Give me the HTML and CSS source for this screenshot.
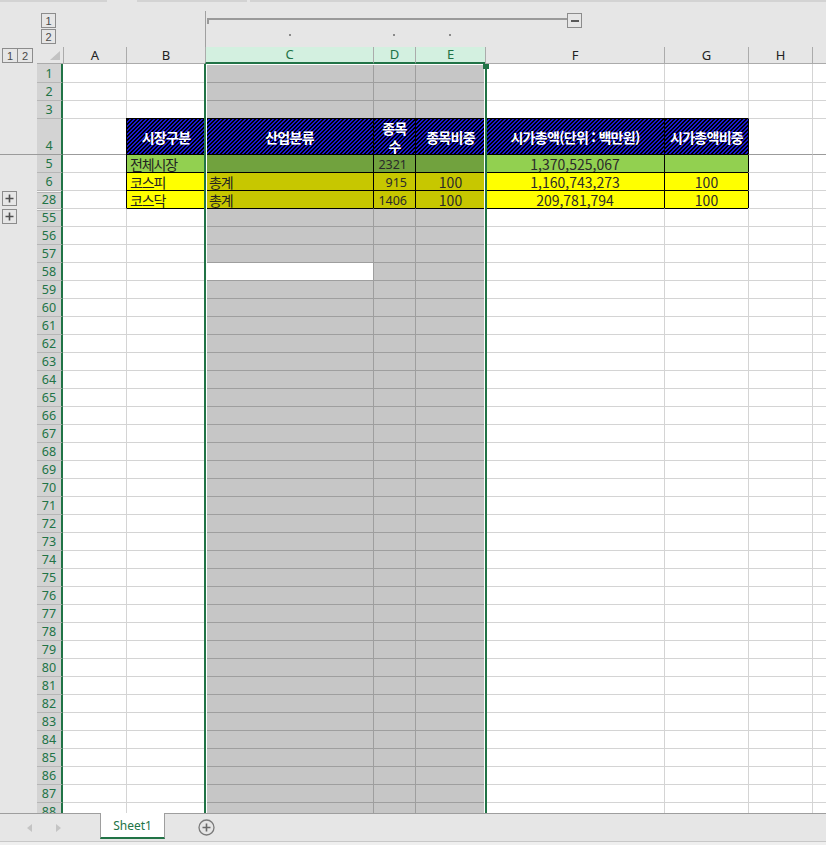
FILE: index.html
```html
<!DOCTYPE html>
<html lang="ko">
<head>
<meta charset="utf-8">
<title>Sheet1</title>
<link rel="stylesheet" href="styles.css">
</head>
<body>
<div class="app">
  <div class="topstrip"><span class="seg s1"></span><span class="seg s2"></span><span class="seg s3"></span></div>

  <div class="colout">
    <span></span>
    <span class="lvls"><b class="lv">1</b><b class="lv">2</b></span>
    <span></span><span></span>
    <div class="grp">
      <div class="barrow"><span class="bar"></span><span class="lv minus"><i></i></span></div>
      <div class="dots"><span><i></i></span><span><i></i></span><span><i></i></span></div>
    </div>
  </div>

  <div class="colhead">
    <span class="rowlv"><b class="lv">1</b><b class="lv lv2">2</b></span>
    <span class="corner"><svg width="10" height="9" viewBox="0 0 10 9"><polygon points="10,0 10,9 0,9" fill="#c2c2c2"/></svg></span>
    <span class="chd">A</span>
    <span class="chd">B</span>
    <span class="chd sel">C</span>
    <span class="chd sel">D</span>
    <span class="chd sel">E</span>
    <span class="chd">F</span>
    <span class="chd">G</span>
    <span class="chd">H</span>
    <span class="chd"></span>
  </div>

  <div class="grid">
    <div class="r r1"><span></span><span>1</span><span></span><span></span><span></span><span></span><span></span><span></span><span></span><span></span><span></span></div>
    <div class="r"><span></span><span>2</span><span></span><span></span><span></span><span></span><span></span><span></span><span></span><span></span><span></span></div>
    <div class="r"><span></span><span>3</span><span></span><span></span><span></span><span></span><span></span><span></span><span></span><span></span><span></span></div>
    <div class="r r4"><span></span><span>4</span><span></span><span class="d hd">시장구분</span><span class="d hd">산업분류</span><span class="d hd"><em>종목<br>수</em></span><span class="d hd">종목비중</span><span class="d hd">시가총액(단위 : 백만원)</span><span class="d hd">시가총액비중</span><span class="dr"></span><span></span></div>
    <div class="r r5"><span></span><span>5</span><span></span><span class="d g l">전체시장</span><span class="d gs"></span><span class="d gs n rt">2321</span><span class="d gs"></span><span class="d g n c">1,370,525,067</span><span class="d g"></span><span class="dr"></span><span></span></div>
    <div class="r"><span></span><span>6</span><span></span><span class="d y l">코스피</span><span class="d ys l">총계</span><span class="d ys n rt">915</span><span class="d ys n c">100</span><span class="d y n c">1,160,743,273</span><span class="d y n c">100</span><span class="dr"></span><span></span></div>
    <div class="r"><span class="ol"><b class="lv plus"><svg width="13" height="13" viewBox="0 0 13 13"><path d="M2.5 6.5h8M6.5 2.5v8" stroke="#505050" stroke-width="1.6"/></svg></b></span><span class="hid">28</span><span></span><span class="d y l">코스닥</span><span class="d ys l">총계</span><span class="d ys n rt">1406</span><span class="d ys n c">100</span><span class="d y n c">209,781,794</span><span class="d y n c">100</span><span class="dr"></span><span></span></div>
    <div class="r"><span class="ol"><b class="lv plus"><svg width="13" height="13" viewBox="0 0 13 13"><path d="M2.5 6.5h8M6.5 2.5v8" stroke="#505050" stroke-width="1.6"/></svg></b></span><span class="hid">55</span><span></span><span class="dt"></span><span class="dt"></span><span class="dt"></span><span class="dt"></span><span class="dt"></span><span class="dt"></span><span></span><span></span></div>
    <div class="r"><span></span><span>56</span><span></span><span></span><span></span><span></span><span></span><span></span><span></span><span></span><span></span></div>
    <div class="r"><span></span><span>57</span><span></span><span></span><span></span><span></span><span></span><span></span><span></span><span></span><span></span></div>
    <div class="r"><span></span><span>58</span><span></span><span></span><span class="act"></span><span></span><span></span><span></span><span></span><span></span><span></span></div>
    <div class="r"><span></span><span>59</span><span></span><span></span><span></span><span></span><span></span><span></span><span></span><span></span><span></span></div>
    <div class="r"><span></span><span>60</span><span></span><span></span><span></span><span></span><span></span><span></span><span></span><span></span><span></span></div>
    <div class="r"><span></span><span>61</span><span></span><span></span><span></span><span></span><span></span><span></span><span></span><span></span><span></span></div>
    <div class="r"><span></span><span>62</span><span></span><span></span><span></span><span></span><span></span><span></span><span></span><span></span><span></span></div>
    <div class="r"><span></span><span>63</span><span></span><span></span><span></span><span></span><span></span><span></span><span></span><span></span><span></span></div>
    <div class="r"><span></span><span>64</span><span></span><span></span><span></span><span></span><span></span><span></span><span></span><span></span><span></span></div>
    <div class="r"><span></span><span>65</span><span></span><span></span><span></span><span></span><span></span><span></span><span></span><span></span><span></span></div>
    <div class="r"><span></span><span>66</span><span></span><span></span><span></span><span></span><span></span><span></span><span></span><span></span><span></span></div>
    <div class="r"><span></span><span>67</span><span></span><span></span><span></span><span></span><span></span><span></span><span></span><span></span><span></span></div>
    <div class="r"><span></span><span>68</span><span></span><span></span><span></span><span></span><span></span><span></span><span></span><span></span><span></span></div>
    <div class="r"><span></span><span>69</span><span></span><span></span><span></span><span></span><span></span><span></span><span></span><span></span><span></span></div>
    <div class="r"><span></span><span>70</span><span></span><span></span><span></span><span></span><span></span><span></span><span></span><span></span><span></span></div>
    <div class="r"><span></span><span>71</span><span></span><span></span><span></span><span></span><span></span><span></span><span></span><span></span><span></span></div>
    <div class="r"><span></span><span>72</span><span></span><span></span><span></span><span></span><span></span><span></span><span></span><span></span><span></span></div>
    <div class="r"><span></span><span>73</span><span></span><span></span><span></span><span></span><span></span><span></span><span></span><span></span><span></span></div>
    <div class="r"><span></span><span>74</span><span></span><span></span><span></span><span></span><span></span><span></span><span></span><span></span><span></span></div>
    <div class="r"><span></span><span>75</span><span></span><span></span><span></span><span></span><span></span><span></span><span></span><span></span><span></span></div>
    <div class="r"><span></span><span>76</span><span></span><span></span><span></span><span></span><span></span><span></span><span></span><span></span><span></span></div>
    <div class="r"><span></span><span>77</span><span></span><span></span><span></span><span></span><span></span><span></span><span></span><span></span><span></span></div>
    <div class="r"><span></span><span>78</span><span></span><span></span><span></span><span></span><span></span><span></span><span></span><span></span><span></span></div>
    <div class="r"><span></span><span>79</span><span></span><span></span><span></span><span></span><span></span><span></span><span></span><span></span><span></span></div>
    <div class="r"><span></span><span>80</span><span></span><span></span><span></span><span></span><span></span><span></span><span></span><span></span><span></span></div>
    <div class="r"><span></span><span>81</span><span></span><span></span><span></span><span></span><span></span><span></span><span></span><span></span><span></span></div>
    <div class="r"><span></span><span>82</span><span></span><span></span><span></span><span></span><span></span><span></span><span></span><span></span><span></span></div>
    <div class="r"><span></span><span>83</span><span></span><span></span><span></span><span></span><span></span><span></span><span></span><span></span><span></span></div>
    <div class="r"><span></span><span>84</span><span></span><span></span><span></span><span></span><span></span><span></span><span></span><span></span><span></span></div>
    <div class="r"><span></span><span>85</span><span></span><span></span><span></span><span></span><span></span><span></span><span></span><span></span><span></span></div>
    <div class="r"><span></span><span>86</span><span></span><span></span><span></span><span></span><span></span><span></span><span></span><span></span><span></span></div>
    <div class="r"><span></span><span>87</span><span></span><span></span><span></span><span></span><span></span><span></span><span></span><span></span><span></span></div>
    <div class="r"><span></span><span>88</span><span></span><span></span><span></span><span></span><span></span><span></span><span></span><span></span><span></span></div>
    <div class="selbox"><span class="handle"></span></div>
  </div>

  <div class="tabbar">
    <div class="nav">
      <svg class="arr al" width="5" height="8" viewBox="0 0 5 8"><polygon points="5,0 5,8 0,4" fill="#c4c4c4"/></svg>
      <svg class="arr ar" width="5" height="8" viewBox="0 0 5 8"><polygon points="0,0 0,8 5,4" fill="#c4c4c4"/></svg>
    </div>
    <div class="tab">Sheet1</div>
    <svg class="addsheet" width="17" height="17" viewBox="0 0 17 17"><circle cx="8.5" cy="8.5" r="7.5" fill="none" stroke="#7a7a7a" stroke-width="1.3"/><path d="M4.5 8.5h8M8.5 4.5v8" stroke="#6a6a6a" stroke-width="1.6"/></svg>
  </div>
  <div class="foot"></div>
</div>
</body>
</html>
```

FILE: styles.css
```css
:root {
  --cols: 37px 26px 63px 79px 168px 42px 70px 179px 84px 64px 14px;
  --green: #217346;
}
* { box-sizing: border-box; }
html, body { margin: 0; padding: 0; }
body {
  background: #e6e6e6;
  font-family: "Noto Sans", "Liberation Sans", sans-serif;
}
.app {
  width: 826px;
  height: 845px;
  overflow: hidden;
  background: #e6e6e6;
  display: flex;
  flex-direction: column;
}

/* top strip */
.topstrip { height: 2px; display: flex; flex: none; }
.seg { height: 2px; background: #d3d3d3; }
.s1 { width: 107px; }
.s2 { width: 110px; margin-left: 30px; }
.s3 { flex: 1; margin-left: 3px; }

/* outline level buttons */
.lv {
  display: flex;
  align-items: center;
  justify-content: center;
  width: 15px;
  height: 15px;
  border: 1px solid #8c8c8c;
  font-family: "Liberation Sans", sans-serif;
  font-weight: 400;
  font-size: 11px;
  color: #4a4a4a;
  background: #e6e6e6;
}

/* column outline area */
.colout {
  flex: none;
  height: 45px;
  display: grid;
  grid-template-columns: var(--cols);
}
.lvls {
  display: flex;
  flex-direction: column;
  gap: 1px;
  padding: 11px 0 0 4px;
}
.grp {
  grid-column: 5 / 9;
  margin-top: 9px;
  border-left: 1px solid #a0a0a0;
}
.barrow {
  display: flex;
  align-items: flex-start;
  margin-top: 2px;
  height: 15px;
}
.bar {
  position: relative;
  width: 360px;
  height: 2px;
  margin: 5px 0 0 1px;
  background: #9a9a9a;
}
.bar::before {
  content: "";
  position: absolute;
  left: 0;
  top: 0;
  width: 2px;
  height: 6px;
  background: #9a9a9a;
}
.minus i {
  display: block;
  width: 8px;
  height: 2px;
  background: #595959;
}
.dots {
  display: grid;
  grid-template-columns: 167px 42px 70px;
  margin-top: 6px;
}
.dots span { display: flex; justify-content: center; }
.dots i { display: block; width: 2px; height: 2px; background: #8a8a8a; }

/* column header row */
.colhead {
  flex: none;
  height: 17px;
  display: grid;
  grid-template-columns: var(--cols);
}
.rowlv { display: flex; padding: 1px 0 0 2px; }
.rowlv .lv { width: 16px; }
.rowlv .lv2 { margin-left: -1px; }
.corner {
  display: flex;
  align-items: flex-end;
  justify-content: flex-end;
  padding: 0 3px 3px 0;
  border-bottom: 1px solid #ababab;
}
.chd {
  display: flex;
  align-items: center;
  justify-content: center;
  border-left: 1px solid #ababab;
  border-bottom: 1px solid #ababab;
  font-size: 13px;
  color: #222;
  line-height: 1;
}
.chd.sel {
  background: #d3f0e0;
  color: var(--green);
  border-bottom: 2px solid var(--green);
}

/* sheet grid */
.grid {
  flex: none;
  height: 749px;
  position: relative;
  overflow: hidden;
  background: #fff;
}
.r {
  display: grid;
  grid-template-columns: var(--cols);
  height: 18px;
}
.r.r4 { height: 36px; }
.r > span {
  display: flex;
  align-items: center;
  background: #fff;
  border-left: 1px solid #d4d4d4;
  border-top: 1px solid #d4d4d4;
  font-family: "Noto Sans CJK KR", "Noto Sans", sans-serif;
  font-size: 14px;
  letter-spacing: -1.1px;
  line-height: 1;
  color: #222;
  white-space: nowrap;
  overflow: hidden;
}
.r1 > span { border-top: 0; }
.r > span:nth-child(1) {
  background: #e6e6e6;
  border: 0;
  align-items: flex-start;
  padding: 1px 0 0 2px;
}
.r > span:nth-child(2) {
  background: #d3d3d3;
  border-left: 0;
  border-right: 2px solid var(--green);
  border-top: 1px solid #b6b6b6;
  justify-content: center;
  align-items: flex-end;
  padding-bottom: 2px;
  font-family: "Noto Sans", "Liberation Sans", sans-serif;
  font-size: 12.5px;
  letter-spacing: 0;
  color: var(--green);
}
.r1 > span:nth-child(2) { border-top: 0; }
.r > span:nth-child(3) { border-left: 0; }
.r > span:nth-child(5),
.r > span:nth-child(6),
.r > span:nth-child(7) {
  background: #c6c6c6;
  border-color: #9e9e9e;
}
.r > span.hid {
  box-shadow: inset 0 1px 0 #f4f4f4, inset 0 2px 0 #b6b6b6;
}
.r5 > span { border-top-color: #9b9b9b; }
.r5 > span:nth-child(1) { border-top: 1px solid #9b9b9b; }
.r5 > span:nth-child(2) { border-top-color: #9b9b9b; }
.r > span.act { background: #fff; }

/* data table */
.r > span.d { border-left-color: #000; border-top-color: #000; }
.r > span.dr { border-left-color: #000; }
.r > span.dt { border-top-color: #000; }
.r > span.hd {
  background: repeating-linear-gradient(135deg, #000 0 1.7px, #1a1ad0 1.7px 2.83px);
  color: #fff;
  font-weight: 700;
  letter-spacing: -0.7px;
  justify-content: center;
  text-align: center;
}
.hd em { font-style: normal; line-height: 18px; display: block; }
.r > span.g { background: #92d050; }
.r > span.gs { background: #71a23e; }
.r > span.y { background: #ffff00; }
.r > span.ys { background: #c7c700; }
.r > span.l { padding-left: 3px; }
.r > span.c { justify-content: center; }
.r > span.n { letter-spacing: 0; color: #2a2a2a; }
.r > span.rt {
  justify-content: flex-end;
  padding: 3px 8px 0 0;
  font-family: "Noto Sans", "Liberation Sans", sans-serif;
  font-size: 12.5px;
}

/* selection */
.selbox {
  position: absolute;
  top: 0;
  bottom: 0;
  left: 204px;
  width: 283px;
  border-left: 2px solid var(--green);
  border-right: 2px solid var(--green);
  box-shadow: inset 1px 0 0 #fff, inset -1px 0 0 #fff, inset 0 1px 0 #fff;
}
.handle {
  position: absolute;
  top: 0;
  right: -4px;
  width: 6px;
  height: 5px;
  background: var(--green);
}

/* row outline buttons */
.plus { background: #e6e6e6; }

/* tab bar */
.tabbar {
  flex: none;
  height: 28px;
  display: flex;
  align-items: center;
  border-top: 1px solid #9e9e9e;
  background: #e6e6e6;
}
.nav {
  width: 100px;
  display: flex;
  align-items: center;
}
.arr { display: block; }
.al { margin-left: 27px; }
.ar { margin-left: 24px; }
.tab {
  align-self: flex-start;
  margin-top: -1px;
  width: 65px;
  height: 26px;
  background: #fff;
  border-left: 1px solid #9e9e9e;
  border-right: 1px solid #9e9e9e;
  border-bottom: 2px solid var(--green);
  display: flex;
  align-items: center;
  justify-content: center;
  font-size: 12px;
  color: var(--green);
}
.addsheet { margin-left: 33px; display: block; }
.foot {
  flex: none;
  height: 4px;
  border-top: 1px solid #c8c8c8;
  background: #efefef;
}
```
